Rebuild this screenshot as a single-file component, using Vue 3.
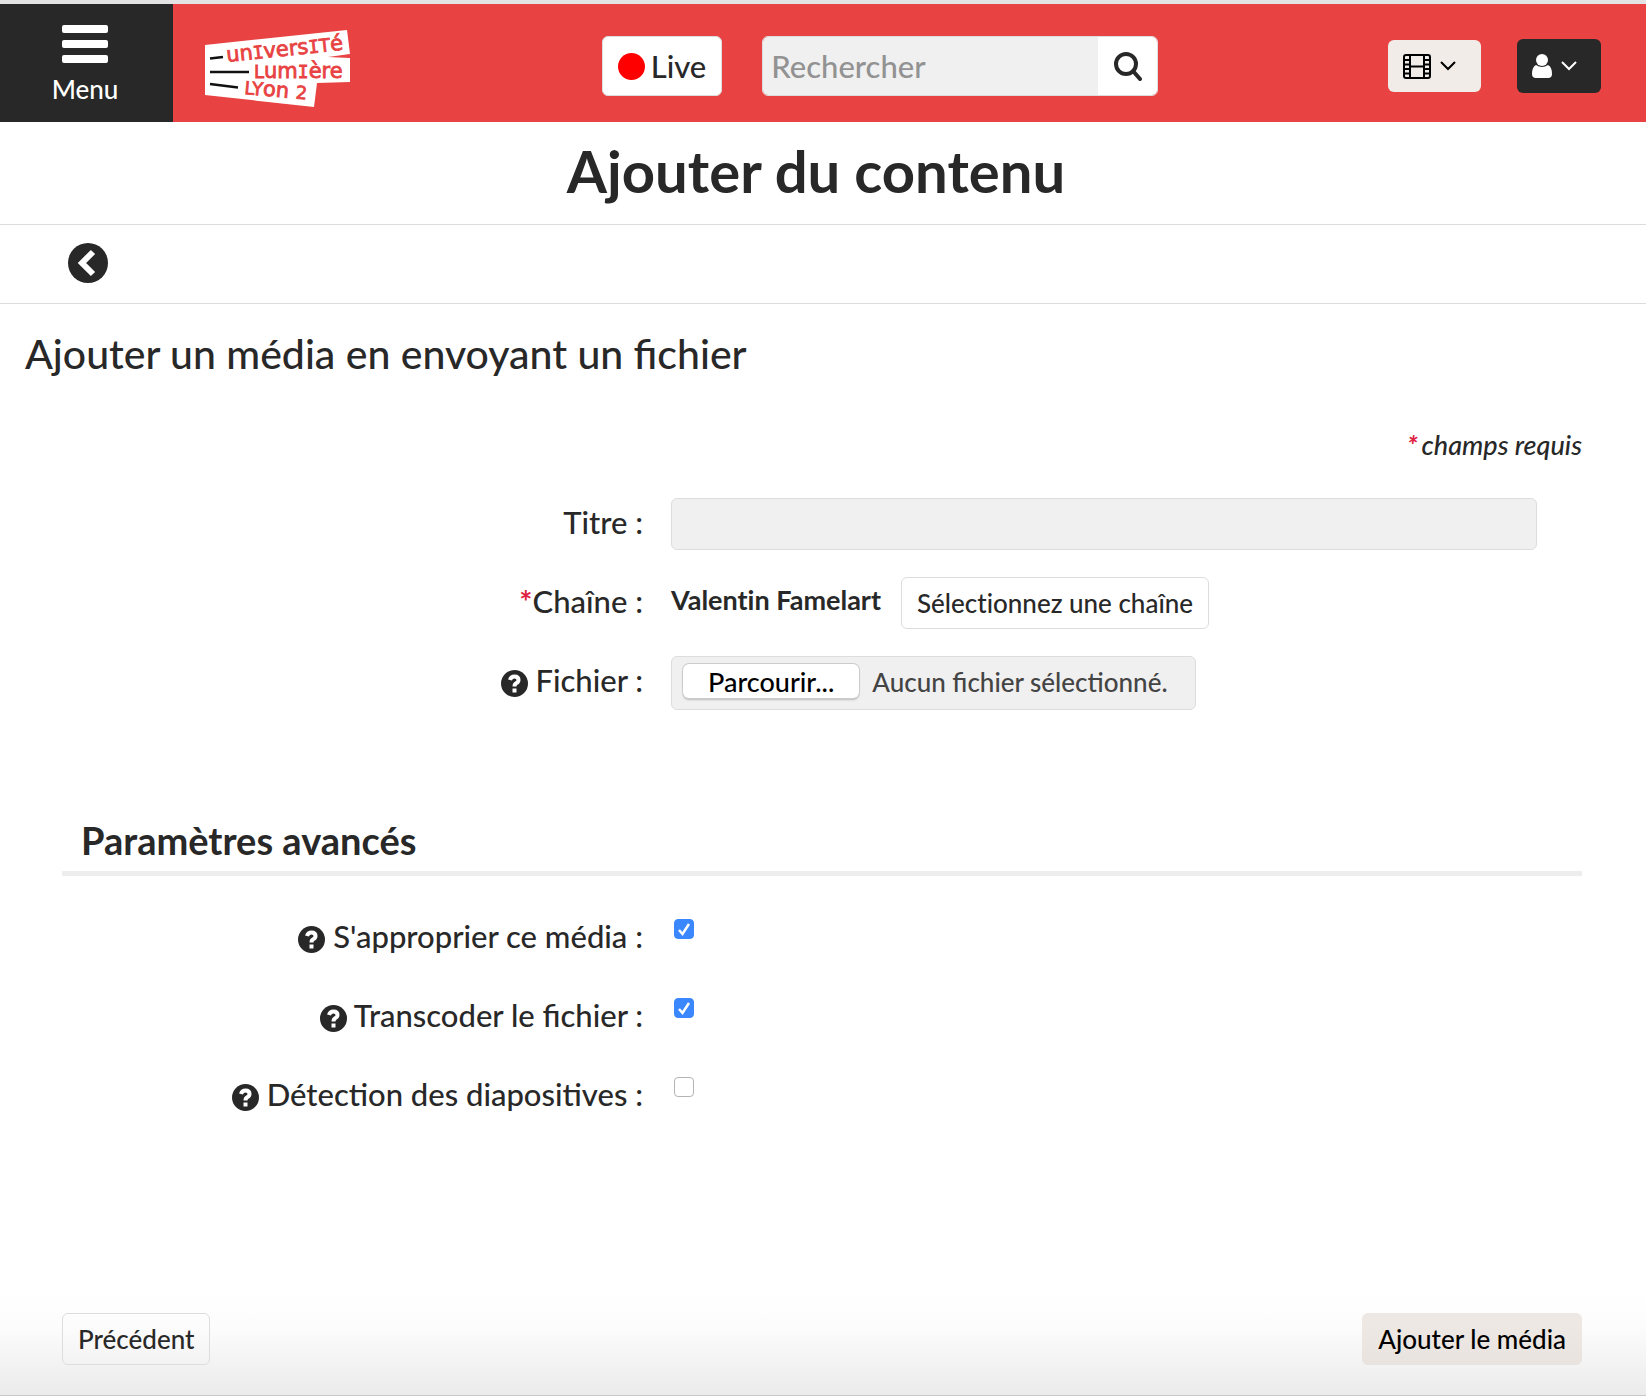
<template>
  <div class="page">
    <header class="topbar">
      <button type="button" class="menu-btn">
        <svg viewBox="0 0 46 38" class="menu-icon" aria-hidden="true">
          <rect y="0" width="46" height="8" rx="2" />
          <rect y="15" width="46" height="8" rx="2" />
          <rect y="30" width="46" height="8" rx="2" />
        </svg>
        <span>Menu</span>
      </button>

      <a href="#" class="logo" aria-label="Université Lumière Lyon 2">
        <svg viewBox="0 0 145 77">
          <path class="logo-bg" d="M0 15 L142 0 L145 24 L123 27 L145 28 V52 L112 53 L109 77 L0 65 Z" />
          <path class="logo-lines" d="M5 28.500 L18 27 M5 42 H44 M5 54 L33 57.500" />
          <g class="logo-text">
            <text transform="translate(22 32) rotate(-6)">un<tspan class="slab">I</tspan>vers<tspan class="slab">I</tspan><tspan class="cap">T</tspan>é</text>
            <text transform="translate(49 48)"><tspan class="cap">L</tspan>um<tspan class="slab">I</tspan>ère</text>
            <text transform="translate(39 64) rotate(5)"><tspan class="cap">LY</tspan>on <tspan class="cap">2</tspan></text>
          </g>
        </svg>
      </a>

      <div class="topbar-center">
        <a href="#" class="live-btn"><span class="live-dot"></span>Live</a>
        <form class="search" role="search" @submit.prevent>
          <input v-model="query" type="search" placeholder="Rechercher" aria-label="Rechercher" />
          <button type="submit" aria-label="Lancer la recherche">
            <svg viewBox="0 0 30 30" class="search-icon">
              <circle cx="13" cy="13" r="10" />
              <path d="M20 20 L27 28" />
            </svg>
          </button>
        </form>
      </div>

      <div class="topbar-actions">
        <button type="button" class="drop-btn media" aria-label="Médias">
          <svg viewBox="0 0 28 25" class="film-icon">
            <rect x="1" y="1" width="26" height="23" rx="2" />
            <path d="M7 1 V24 M21 1 V24 M7 12.500 H21 M1 6 H7 M1 10.500 H7 M1 15 H7 M1 19.500 H7 M21 6 H27 M21 10.500 H27 M21 15 H27 M21 19.500 H27" />
          </svg>
          <svg viewBox="0 0 16 10" class="chevron"><path d="M1 1 L8 8 L15 1" /></svg>
        </button>
        <button type="button" class="drop-btn user" aria-label="Compte">
          <svg viewBox="0 0 20 24" class="user-icon">
            <circle cx="10" cy="6" r="6" />
            <path d="M4 11 Q10 15 16 11 Q20 13 20 20 Q20 24 16 24 H4 Q0 24 0 20 Q0 13 4 11 Z" />
          </svg>
          <svg viewBox="0 0 16 10" class="chevron"><path d="M1 1 L8 8 L15 1" /></svg>
        </button>
      </div>
    </header>

    <h1 class="page-title">Ajouter du contenu</h1>

    <nav class="back-row">
      <a href="#" aria-label="Retour">
        <svg viewBox="0 0 40 40" class="back-icon">
          <circle cx="20" cy="20" r="20" />
          <path d="M25 9 L14 20 L25 31" />
        </svg>
      </a>
    </nav>

    <h2 class="subtitle">Ajouter un média en envoyant un fichier</h2>

    <form class="upload" @submit.prevent>
      <p class="required-note"><span class="star">*</span>champs requis</p>

      <div class="row">
        <label class="row-label" for="title">Titre :</label>
        <div class="row-field">
          <input id="title" v-model="title" type="text" class="text-input" />
        </div>
      </div>

      <div class="row">
        <label class="row-label" for="channel"><span class="star">*</span>Chaîne :</label>
        <div class="row-field">
          <strong class="channel-name">Valentin Famelart</strong>
          <button id="channel" type="button" class="btn">Sélectionnez une chaîne</button>
        </div>
      </div>

      <div class="row">
        <label class="row-label" for="file">
          <svg viewBox="0 0 27 27" class="help-icon">
            <circle cx="13.500" cy="13.500" r="13.500" />
            <path d="M9 10 Q10 6.500 13.500 6.500 Q17.500 6.500 17.500 10 Q17.500 12 15.500 13 Q13.500 14 13.500 16.500" />
            <rect x="11.500" y="18.500" width="4" height="4" />
          </svg>
          Fichier :
        </label>
        <div class="row-field">
          <label class="file-box">
            <input id="file" type="file" class="file-input" @change="onFile" />
            <span class="file-btn">Parcourir...</span>
            <span class="file-name">{{ fileName }}</span>
          </label>
        </div>
      </div>

      <h3 class="section-title">Paramètres avancés</h3>

      <div v-for="option in options" :key="option.id" class="row option-row">
        <label class="row-label" :for="option.id">
          <svg viewBox="0 0 27 27" class="help-icon">
            <circle cx="13.500" cy="13.500" r="13.500" />
            <path d="M9 10 Q10 6.500 13.500 6.500 Q17.500 6.500 17.500 10 Q17.500 12 15.500 13 Q13.500 14 13.500 16.500" />
            <rect x="11.500" y="18.500" width="4" height="4" />
          </svg>
          {{ option.label }} :
        </label>
        <div class="row-field">
          <input :id="option.id" v-model="option.checked" type="checkbox" class="checkbox" />
        </div>
      </div>
    </form>

    <footer class="actions">
      <button type="button" class="btn">Précédent</button>
      <button type="button" class="btn btn-primary">Ajouter le média</button>
    </footer>
  </div>
</template>

<script setup>
import { reactive, ref } from "vue";

const query = ref("");
const title = ref("");
const fileName = ref("Aucun fichier sélectionné.");

const options = reactive([
  { id: "own", label: "S'approprier ce média", checked: true },
  { id: "transcode", label: "Transcoder le fichier", checked: true },
  { id: "slides", label: "Détection des diapositives", checked: false },
]);

function onFile(event) {
  const file = event.target.files[0];
  fileName.value = file ? file.name : "Aucun fichier sélectionné.";
}
</script>

<style>
body {
  margin: 0;
  background: #fff;
}
</style>

<style scoped>
.page {
  min-height: 100vh;
  box-sizing: border-box;
  display: flex;
  flex-direction: column;
  border-top: 4px solid #e3e3e3;
  border-bottom: 1px solid #c8c8c8;
  font-family: Lato, sans-serif;
  font-size: 26px;
  font-weight: 500;
  color: #282828;
}

button,
input {
  font: inherit;
  color: inherit;
}

button {
  cursor: pointer;
}

.topbar {
  display: flex;
  align-items: center;
  height: 118px;
  background: #e84242;
}

.menu-btn {
  align-self: stretch;
  width: 173px;
  padding: 3px 3px 0 0;
  border: 0;
  background: #282828;
  color: #fff;
  display: flex;
  flex-direction: column;
  align-items: center;
  justify-content: center;
  gap: 10px;
  line-height: 32px;
}

.menu-icon {
  width: 46px;
  height: 38px;
  fill: #fff;
}

.logo {
  margin-left: 32px;
  padding-top: 10px;
}

.logo svg {
  display: block;
  width: 145px;
  height: 77px;
  overflow: visible;
}

.logo-bg {
  fill: #fff;
}

.logo-lines {
  stroke: #111;
  stroke-width: 2.5;
}

.logo-text {
  fill: #e84242;
  stroke: #e84242;
  stroke-width: 0.8;
  font-family: "DejaVu Sans", sans-serif;
  font-size: 21px;
  font-weight: 400;
}

.logo-text .cap {
  font-size: 18px;
}

.logo-text .slab {
  font-family: "DejaVu Sans Mono", monospace;
  font-size: 18px;
}

.topbar-center {
  flex: 1;
  display: flex;
  justify-content: center;
  gap: 40px;
  padding: 6px 0 0 22px;
}

.live-btn {
  display: flex;
  align-items: center;
  gap: 6px;
  box-sizing: border-box;
  height: 60px;
  padding: 0 15px;
  border: 1px solid #ddd;
  border-radius: 6px;
  background: #fff;
  color: #282828;
  font-size: 31px;
  text-decoration: none;
}

.live-dot {
  width: 27px;
  height: 27px;
  border-radius: 50%;
  background: #f00;
}

.search {
  display: flex;
  box-sizing: border-box;
  width: 396px;
  height: 60px;
  border: 1px solid #ddd;
  border-radius: 6px;
  overflow: hidden;
}

.search input {
  flex: 1;
  min-width: 0;
  padding: 0 8px;
  border: 0;
  background: #f0f0f0;
  font-size: 31px;
}

.search input::placeholder {
  color: #929292;
}

.search button {
  width: 59px;
  padding: 0;
  border: 0;
  background: #fff;
}

.search-icon {
  display: block;
  width: 30px;
  height: 30px;
  margin: 0 auto;
  fill: none;
  stroke: #282828;
  stroke-width: 4;
  stroke-linecap: round;
}

.topbar-actions {
  display: flex;
  align-items: center;
  gap: 36px;
  padding: 6px 45px 0 0;
}

.drop-btn {
  display: flex;
  align-items: center;
  gap: 9px;
  padding: 0 15px;
  border: 0;
  border-radius: 6px;
}

.drop-btn.media {
  width: 93px;
  height: 52px;
  background: #f1ece8;
  color: #000;
}

.drop-btn.user {
  width: 84px;
  height: 54px;
  background: #282828;
  color: #fff;
}

.film-icon {
  width: 28px;
  height: 25px;
  fill: none;
  stroke: currentColor;
  stroke-width: 2;
}

.user-icon {
  width: 20px;
  height: 24px;
  fill: currentColor;
}

.chevron {
  width: 16px;
  height: 10px;
  fill: none;
  stroke: currentColor;
  stroke-width: 2;
}

.page-title {
  margin: 0;
  padding: 14px 14px 18px 0;
  border-bottom: 1px solid #ddd;
  font-size: 58px;
  line-height: 70px;
  font-weight: 700;
  text-align: center;
}

.back-row {
  padding: 18px 68px 20px;
  border-bottom: 1px solid #ddd;
}

.back-icon {
  display: block;
  width: 40px;
  height: 40px;
  fill: #282828;
}

.back-icon path {
  fill: none;
  stroke: #fff;
  stroke-width: 6;
}

.subtitle {
  margin: 0;
  padding: 25px 25px 0;
  font-size: 41px;
  line-height: 50px;
  font-weight: 500;
}

.upload {
  padding: 0 64px 0 62px;
}

.required-note {
  margin: 48px 0 35px;
  font-size: 27px;
  line-height: 36px;
  font-style: italic;
  text-align: right;
}

.star {
  color: #e0213f;
  font-weight: 700;
}

.required-note .star {
  margin-right: 4px;
}

.row {
  display: flex;
  margin-bottom: 25px;
  min-height: 54px;
}

.row-label {
  flex: 0 0 40%;
  box-sizing: border-box;
  padding-right: 27px;
  font-size: 31px;
  line-height: 48px;
  text-align: right;
}

.row-field {
  flex: 1;
  display: flex;
  align-items: flex-start;
  padding: 0 45px 0 1px;
}

.help-icon {
  width: 27px;
  height: 27px;
  vertical-align: -5px;
  fill: #282828;
}

.help-icon path {
  fill: none;
  stroke: #fff;
  stroke-width: 4;
}

.help-icon rect {
  fill: #fff;
}

.text-input {
  flex: 1;
  box-sizing: border-box;
  height: 52px;
  padding: 0 14px;
  border: 1px solid #ddd;
  border-radius: 6px;
  background: #f0f0f0;
}

.channel-name {
  margin-right: 20px;
  font-size: 27px;
  line-height: 46px;
  font-weight: 700;
  font-variant-ligatures: no-common-ligatures;
}

.btn {
  box-sizing: border-box;
  height: 52px;
  padding: 0 15px;
  border: 1px solid #ddd;
  border-radius: 6px;
  background: transparent;
  font-variant-ligatures: no-common-ligatures;
}

.btn-primary {
  border-color: transparent;
  background: rgba(223, 211, 204, 0.5);
  color: #000;
}

.file-box {
  position: relative;
  display: flex;
  align-items: flex-start;
  gap: 13px;
  box-sizing: border-box;
  height: 54px;
  padding: 7px 27px 0 11px;
  border: 1px solid #ddd;
  border-radius: 6px;
  background: #f0f0f0;
  line-height: 36px;
}

.file-input {
  position: absolute;
  inset: 0;
  width: 100%;
  opacity: 0;
}

.file-btn {
  box-sizing: border-box;
  height: 34px;
  padding: 0 25px;
  border-radius: 6px;
  background: #fff;
  box-shadow: 0 0 0 1px #ccc, 0 2px 2px #bbb;
  color: #000;
  font-size: 27px;
}

.file-name {
  color: #444;
}

.section-title {
  margin: 107px 0 43px;
  padding: 0 19px 8px;
  border-bottom: 5px solid #ededed;
  font-size: 38px;
  line-height: 46px;
  font-weight: 700;
}

.option-row .row-label {
  line-height: 34px;
}

.checkbox {
  appearance: none;
  box-sizing: border-box;
  width: 20px;
  height: 20px;
  margin: 0 3px;
  border: 1px solid #b4b4b4;
  border-radius: 4px;
  background: #fff;
}

.checkbox:checked {
  border-color: #3b87fd;
  background: #3b87fd url("data:image/svg+xml,%3Csvg xmlns='http://www.w3.org/2000/svg' viewBox='0 0 18 18'%3E%3Cpath d='M4 10 L7.500 14 L14 4' fill='none' stroke='white' stroke-width='2.500'/%3E%3C/svg%3E") center / 18px 18px no-repeat;
}

.actions {
  display: flex;
  justify-content: space-between;
  margin-top: auto;
  padding: 22px 64px 30px 62px;
  background: linear-gradient(#fff, #fcfcfc 35%, #ebebeb);
}
</style>
